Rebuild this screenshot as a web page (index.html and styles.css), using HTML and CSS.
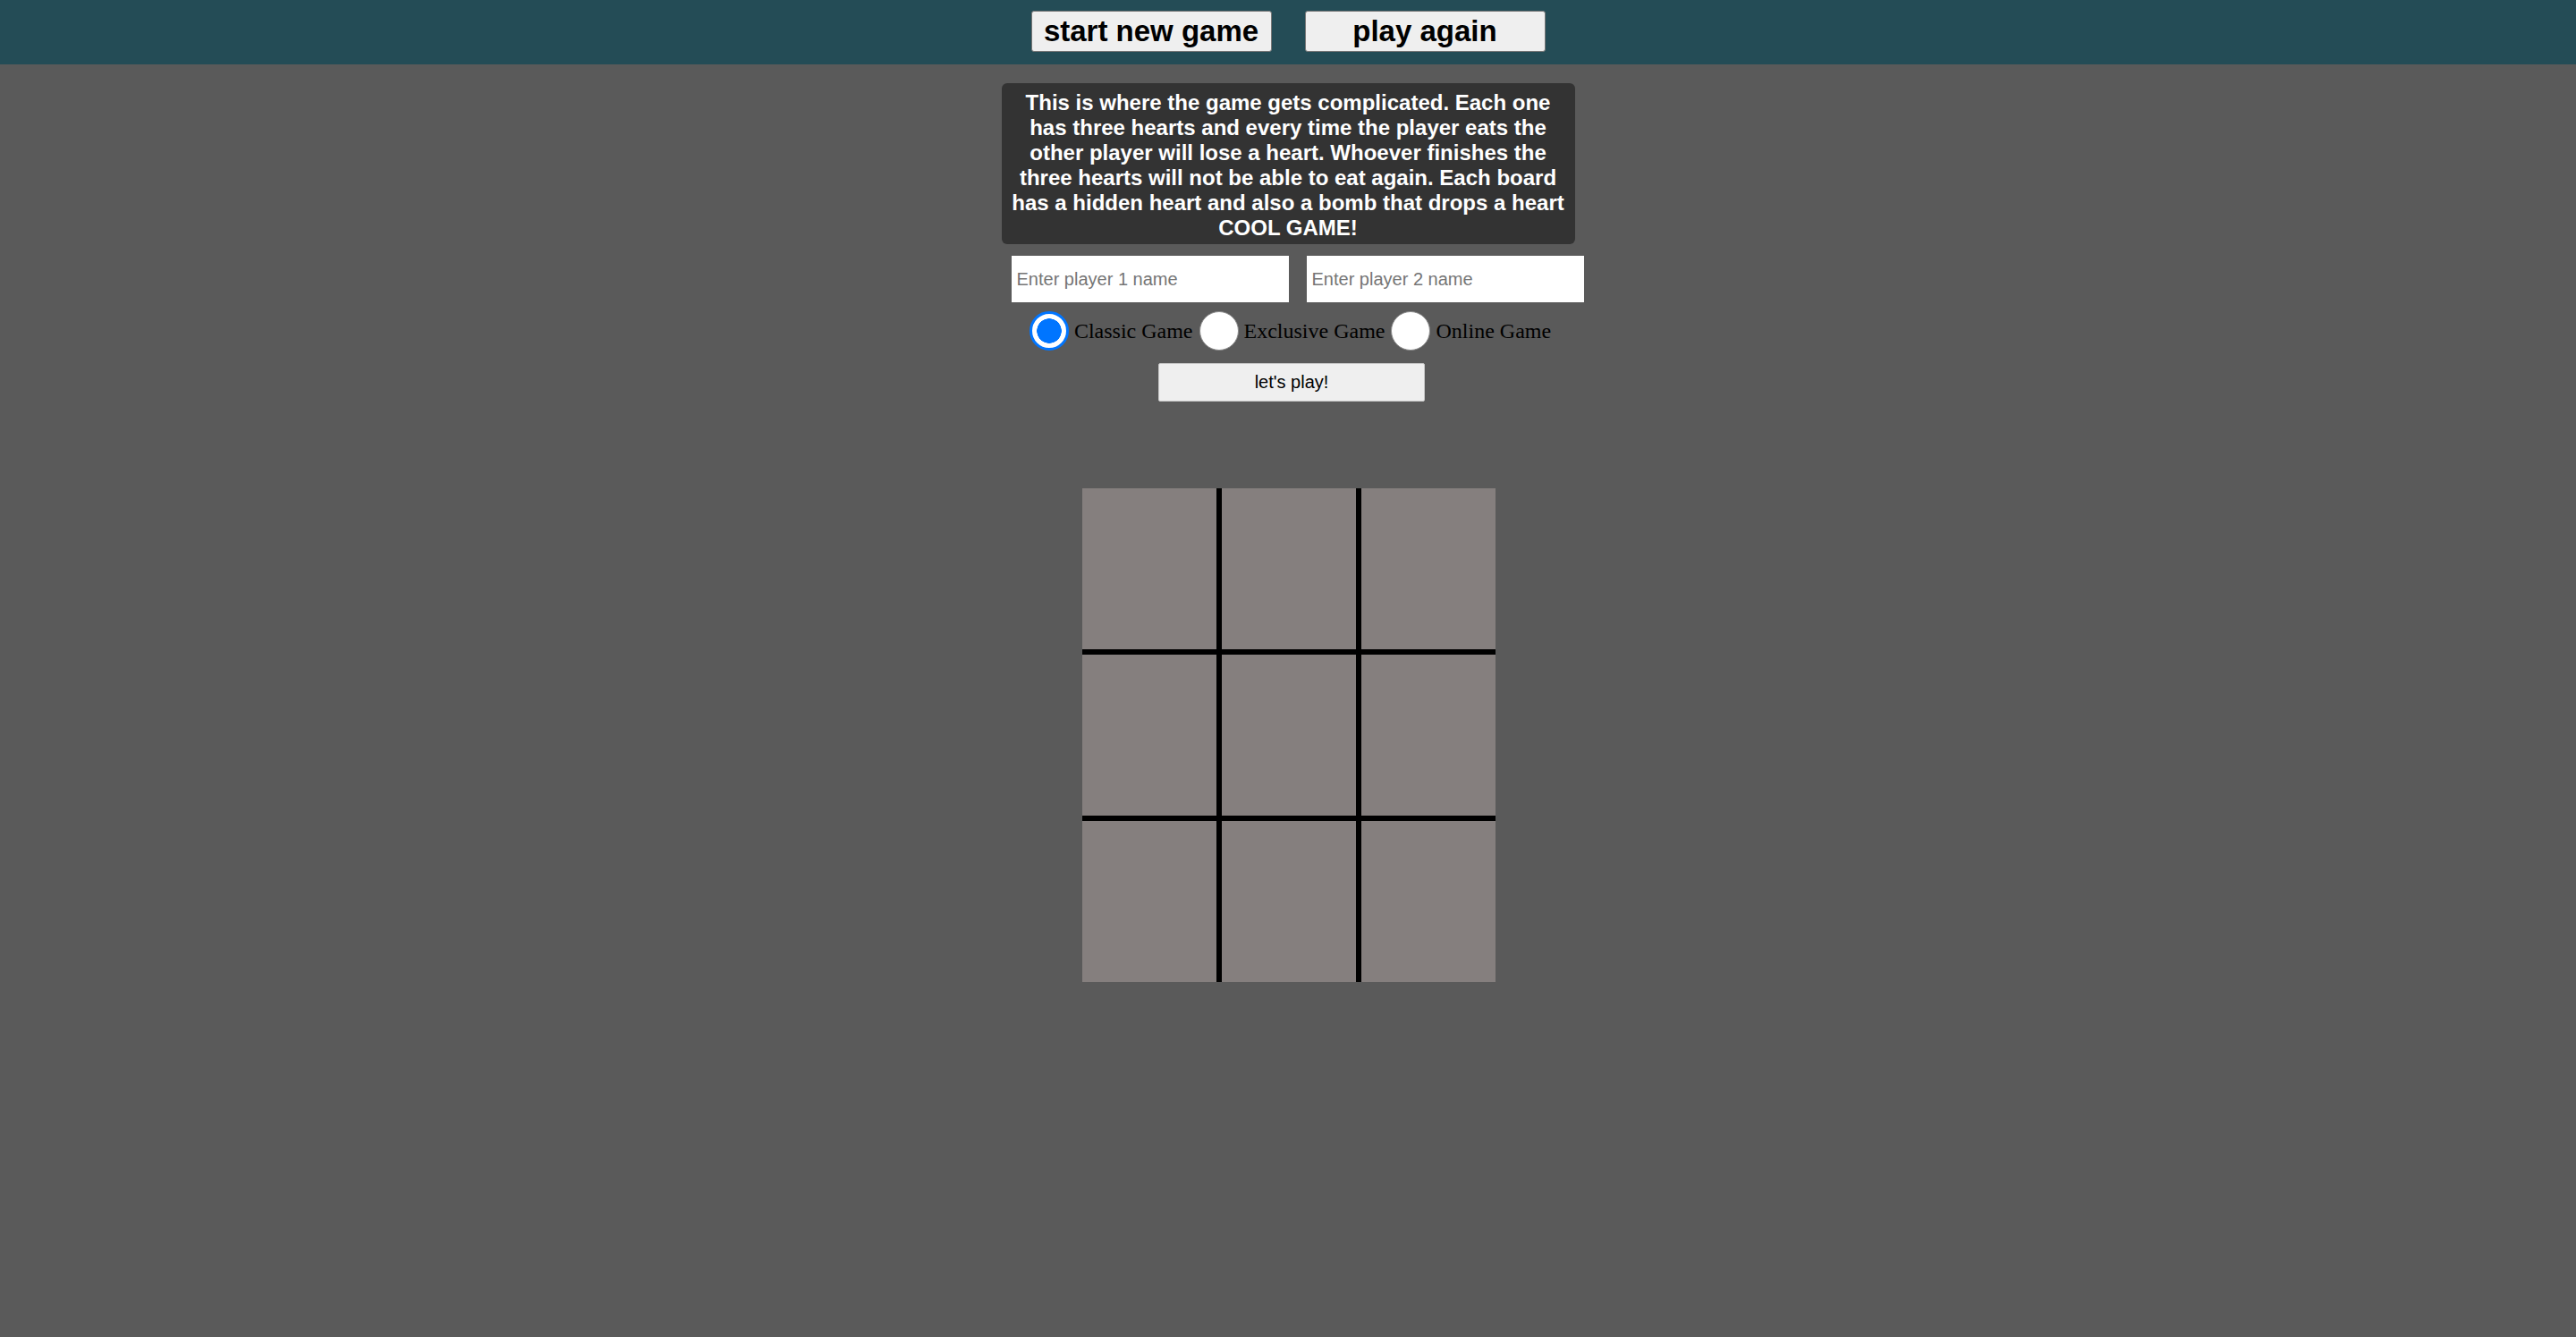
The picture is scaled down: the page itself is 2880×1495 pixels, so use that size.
FILE: index.html
```html
<!DOCTYPE html>
<html lang="en">
<head>
<meta charset="utf-8">
<title>Tic Tac Toe</title>
<link rel="stylesheet" href="styles.css">
</head>
<body>
<header class="topbar">
  <button class="top-btn">start new game</button>
  <button class="top-btn">play again</button>
</header>
<main class="content">
  <div class="rules">This is where the game gets complicated. Each one<br>has three hearts and every time the player eats the<br>other player will lose a heart. Whoever finishes the<br>three hearts will not be able to eat again. Each board<br>has a hidden heart and also a bomb that drops a heart<br>COOL GAME!</div>
  <div class="names">
    <input class="name-input" type="text" placeholder="Enter player 1 name">
    <input class="name-input" type="text" placeholder="Enter player 2 name">
  </div>
  <div class="modes">
    <label class="mode"><input class="mode-radio" type="radio" name="mode" checked><span class="mode-text">Classic Game</span></label>
    <label class="mode"><input class="mode-radio" type="radio" name="mode"><span class="mode-text">Exclusive Game</span></label>
    <label class="mode"><input class="mode-radio" type="radio" name="mode"><span class="mode-text">Online Game</span></label>
  </div>
  <button class="play-btn">let's play!</button>
  <div class="board">
    <div class="cell"></div><div class="cell"></div><div class="cell"></div>
    <div class="cell"></div><div class="cell"></div><div class="cell"></div>
    <div class="cell"></div><div class="cell"></div><div class="cell"></div>
  </div>
</main>
</body>
</html>
```
FILE: styles.css
```css
html, body {
  margin: 0;
  padding: 0;
}
body {
  background: #5a5a5a;
  font-family: "Liberation Sans", Arial, sans-serif;
  min-height: 1495px;
}
.topbar {
  height: 72px;
  box-sizing: border-box;
  padding-top: 12px;
  background: #244c56;
  display: flex;
  justify-content: center;
  align-items: flex-start;
  gap: 37px;
}
.top-btn {
  width: 269px;
  height: 46px;
  padding: 0;
  background: #efefef;
  border: 1px solid #767676;
  border-radius: 3px;
  color: #000;
  font-family: "Liberation Sans", Arial, sans-serif;
  font-weight: bold;
  font-size: 33px;
  line-height: 44px;
}
.content {
  display: flex;
  flex-direction: column;
  align-items: center;
}
.rules {
  margin-top: 21px;
  width: 641px;
  height: 180px;
  box-sizing: border-box;
  padding: 8px 4px 4px;
  background: #333333;
  color: #ffffff;
  border-radius: 6px;
  font-weight: bold;
  font-size: 24px;
  line-height: 28px;
  text-align: center;
  white-space: nowrap;
}
.names {
  margin-top: 13px;
  margin-left: 21px;
  display: flex;
  gap: 20px;
}
.name-input {
  width: 310px;
  height: 52px;
  box-sizing: border-box;
  border: none;
  padding: 0 6px;
  margin: 0;
  background: #ffffff;
  font-family: "Liberation Sans", Arial, sans-serif;
  font-size: 20px;
  color: #000;
  outline: none;
}
.name-input::placeholder {
  color: #757575;
}
.modes {
  margin-top: 9px;
  margin-left: 5px;
  height: 45px;
  display: flex;
  align-items: center;
  font-family: "Liberation Serif", "Times New Roman", serif;
  font-size: 24px;
  color: #000;
}
.mode {
  display: flex;
  align-items: center;
}
.mode + .mode {
  margin-left: 7px;
}
.mode-radio {
  appearance: none;
  -webkit-appearance: none;
  width: 44px;
  height: 44px;
  margin: 0 6px 0 0;
  border-radius: 50%;
  background: #ffffff;
  border: 1px solid #8a8a8a;
  box-sizing: border-box;
}
.mode-radio:checked {
  border: 3px solid #0075ff;
  background: radial-gradient(circle, #0075ff 0 13.5px, #ffffff 14px);
}
.mode-text {
  line-height: 28px;
}
.play-btn {
  margin-top: 14px;
  margin-left: 8px;
  width: 298px;
  height: 43px;
  padding: 0;
  background: #efefef;
  border: 1px solid #c8c8c8;
  border-radius: 2px;
  color: #000;
  font-family: "Liberation Sans", Arial, sans-serif;
  font-size: 20px;
}
.board {
  margin-top: 97px;
  margin-left: 2px;
  display: grid;
  grid-template-columns: repeat(3, 150px);
  grid-template-rows: repeat(3, 180px);
  gap: 6px;
  background: #000000;
}
.cell {
  background: #857f7e;
}
```
